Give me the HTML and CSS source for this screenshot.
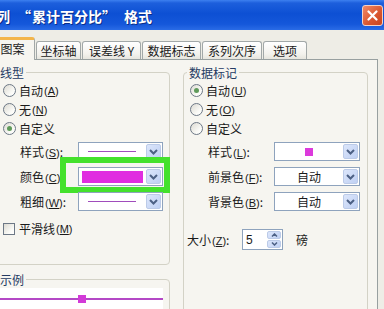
FILE: index.html
```html
<!DOCTYPE html>
<html lang="zh-CN">
<head>
  <meta charset="UTF-8" />
  <meta name="viewport" content="width=device-width, initial-scale=1.0" />
  <title>数据系列格式</title>
  <link rel="stylesheet" href="styles.css">
</head>
<body>
  <div class="window">
    <div class="titlebar">
      <span class="title">列<span class="quote open">“</span>累计百分比<span class="quote close-q">”</span>格式</span>
      <span class="close">
        <svg width="11" height="11" viewBox="0 0 11 11"><path d="M1.5 1.5 L9.5 9.5 M9.5 1.5 L1.5 9.5" stroke="#fff" stroke-width="2.2" stroke-linecap="round"/></svg>
      </span>
    </div>

    <div class="tabs">
      <div class="tab active">图案</div>
      <div class="tab w45">坐标轴</div>
      <div class="tab w59">误差线 Y</div>
      <div class="tab w59">数据标志</div>
      <div class="tab w60">系列次序</div>
      <div class="tab w44">选项</div>
    </div>

    <div class="panel">
      <div class="col left">
        <div class="group line-group">
          <div class="group-title">线型</div>
          <div class="radio-row"><span class="radio"></span>自动<span class="key">(<u>A</u>)</span></div>
          <div class="radio-row"><span class="radio"></span>无<span class="key">(<u>N</u>)</span></div>
          <div class="radio-row"><span class="radio on"></span>自定义</div>

          <div class="field first">
            <span class="field-label">样式<span class="key">(<u>S</u>)</span>:</span>
            <div class="select">
              <span class="select-value"><span class="line-sample"></span></span>
              <span class="drop"><svg width="9" height="6" viewBox="0 0 9 6"><path d="M1 1 L4.5 4.5 L8 1" fill="none" stroke="#4d6185" stroke-width="2"/></svg></span>
            </div>
          </div>
          <div class="field highlighted">
            <span class="field-label">颜色<span class="key">(<u>C</u>)</span>:</span>
            <div class="select">
              <span class="select-value"><span class="color-fill"></span></span>
              <span class="drop"><svg width="9" height="6" viewBox="0 0 9 6"><path d="M1 1 L4.5 4.5 L8 1" fill="none" stroke="#4d6185" stroke-width="2"/></svg></span>
            </div>
            <span class="mark-box"></span>
          </div>
          <div class="field">
            <span class="field-label">粗细<span class="key">(<u>W</u>)</span>:</span>
            <div class="select">
              <span class="select-value"><span class="line-sample"></span></span>
              <span class="drop"><svg width="9" height="6" viewBox="0 0 9 6"><path d="M1 1 L4.5 4.5 L8 1" fill="none" stroke="#4d6185" stroke-width="2"/></svg></span>
            </div>
          </div>

          <div class="check-row"><span class="checkbox"></span>平滑线<span class="key">(<u>M</u>)</span></div>
        </div>

        <div class="group sample-group">
          <div class="group-title">示例</div>
          <div class="sample"><span class="marker"></span></div>
        </div>
      </div>

      <div class="col right">
        <div class="group marker-group">
          <div class="group-title">数据标记</div>
          <div class="radio-row"><span class="radio on"></span>自动<span class="key">(<u>U</u>)</span></div>
          <div class="radio-row"><span class="radio"></span>无<span class="key">(<u>O</u>)</span></div>
          <div class="radio-row"><span class="radio"></span>自定义</div>

          <div class="field first">
            <span class="field-label">样式<span class="key">(<u>L</u>)</span>:</span>
            <div class="select">
              <span class="select-value center"><span class="square"></span></span>
              <span class="drop"><svg width="9" height="6" viewBox="0 0 9 6"><path d="M1 1 L4.5 4.5 L8 1" fill="none" stroke="#4d6185" stroke-width="2"/></svg></span>
            </div>
          </div>
          <div class="field">
            <span class="field-label">前景色<span class="key">(<u>F</u>)</span>:</span>
            <div class="select">
              <span class="select-value center">自动</span>
              <span class="drop"><svg width="9" height="6" viewBox="0 0 9 6"><path d="M1 1 L4.5 4.5 L8 1" fill="none" stroke="#4d6185" stroke-width="2"/></svg></span>
            </div>
          </div>
          <div class="field">
            <span class="field-label">背景色<span class="key">(<u>B</u>)</span>:</span>
            <div class="select">
              <span class="select-value center">自动</span>
              <span class="drop"><svg width="9" height="6" viewBox="0 0 9 6"><path d="M1 1 L4.5 4.5 L8 1" fill="none" stroke="#4d6185" stroke-width="2"/></svg></span>
            </div>
          </div>

          <div class="size-row">
            <span class="size-label">大小<span class="key">(<u>Z</u>)</span>:</span>
            <div class="spinner">
              <span class="spin-value">5</span>
              <span class="spin-btns">
                <span class="spin-btn"><svg width="7" height="4" viewBox="0 0 7 4"><path d="M1 3.5 L3.5 1 L6 3.5" fill="none" stroke="#4d6185" stroke-width="1.5"/></svg></span>
                <span class="spin-btn"><svg width="7" height="4" viewBox="0 0 7 4"><path d="M1 0.5 L3.5 3 L6 0.5" fill="none" stroke="#4d6185" stroke-width="1.5"/></svg></span>
              </span>
            </div>
            <span class="unit">磅</span>
          </div>
        </div>
      </div>
    </div>
  </div>
</body>
</html>
```

FILE: styles.css
```css
body {
  margin: 0;
  width: 384px;
  height: 309px;
  overflow: hidden;
  font-family: "Noto Sans CJK SC", "Liberation Sans", sans-serif;
  font-size: 12px;
  color: #1a1a1a;
  background-color: #eeede6;
}

.window {
  display: flex;
  flex-direction: column;
  height: 309px;
}

/* title bar */
.titlebar {
  display: flex;
  justify-content: space-between;
  align-items: center;
  height: 30px;
  flex-shrink: 0;
  background: linear-gradient(to bottom, #3d80f0 0, #1d5fdc 3px, #0d50d4 45%, #1457da 80%, #2a6ce6 100%);
}

.title {
  margin-left: -4px;
  margin-top: 1px;
  color: #fff;
  font-size: 14px;
  font-weight: 700;
  text-shadow: 1px 1px 0 #0a2f8a;
}

/* the quotes take a full square in the old dialog font */
.quote.open {
  padding-left: 7px;
  margin-right: 1px;
}

.quote.close-q {
  padding-right: 8px;
}

.close {
  display: flex;
  justify-content: center;
  align-items: center;
  width: 19px;
  height: 19px;
  margin-right: 1px;
  border: 1px solid #f3d2c6;
  border-radius: 3px;
  background: linear-gradient(135deg, #f08a68 0%, #d9552e 60%, #c8441f 100%);
}

/* tabs */
.tabs {
  display: flex;
  align-items: flex-end;
  gap: 1px;
  height: 29px;
  flex-shrink: 0;
}

.tab {
  box-sizing: border-box;
  height: 18px;
  display: flex;
  justify-content: center;
  align-items: center;
  border: 1px solid #a2a8a8;
  border-bottom: 0;
  border-radius: 3px 3px 0 0;
  background: linear-gradient(to bottom, #ffffff 0%, #f3f2ed 70%, #e6e5de 100%);
  white-space: nowrap;
  line-height: 16px;
}

.tab.active {
  position: relative;
  z-index: 1;
  width: 45px;
  height: 23px;
  margin-left: -10px;
  margin-bottom: -1px;
  padding-bottom: 2px;
  border-top: 3px solid #f3b54a;
  background: #f6f5f0;
}

.w44 { width: 44px; }
.w45 { width: 45px; }
.w59 { width: 59px; }
.w60 { width: 60px; }

/* page */
.panel {
  box-sizing: border-box;
  display: flex;
  gap: 13px;
  flex: 1;
  width: 388px;
  margin-left: -10px;
  border: 1px solid #98a0a0;
  background: #f6f5f0;
}

.col {
  display: flex;
  flex-direction: column;
}

.col.left {
  width: 176px;
  margin-left: 3px;
}

.col.right {
  width: 185px;
}

.group {
  box-sizing: border-box;
  margin-top: 12px;
  border: 1px solid #d3d2c6;
  border-radius: 4px;
}

.group-title {
  width: fit-content;
  height: 16px;
  margin: -8px 0 0 3px;
  padding: 0 2px;
  line-height: 16px;
  color: #253b63;
  background: #f6f5f0;
}

.line-group {
  padding-bottom: 26px;
}

.sample-group {
  margin-top: 14px;
  flex: 1;
}

.marker-group {
  flex: 1;
}

/* radios and checkbox */
.radio-row,
.check-row {
  display: flex;
  align-items: center;
  height: 19px;
  padding-left: 8px;
}

.marker-group .radio-row {
  padding-left: 6px;
}

.radio {
  box-sizing: border-box;
  display: flex;
  justify-content: center;
  align-items: center;
  width: 13px;
  height: 13px;
  margin-right: 3px;
  border: 1px solid #6d7886;
  border-radius: 50%;
  background: linear-gradient(135deg, #dcdad2 0%, #fbfbf8 70%, #ffffff 100%);
}

.radio.on::after {
  content: "";
  width: 5px;
  height: 5px;
  border-radius: 50%;
  background: #5f9a5a;
}

.checkbox {
  box-sizing: border-box;
  width: 12px;
  height: 12px;
  margin-right: 4px;
  border: 1px solid #6d7886;
  background: linear-gradient(135deg, #dcdad2 0%, #fbfbf8 70%, #ffffff 100%);
}

.check-row {
  margin-top: 8px;
}

.key {
  font-family: "Liberation Sans", sans-serif;
  font-size: 11px;
  margin-left: 1px;
}

/* label + dropdown rows */
.field {
  position: relative;
  display: flex;
  align-items: center;
  height: 19px;
  margin-top: 6px;
  padding-left: 25px;
}

.field.first {
  margin-top: 4px;
}

.marker-group .field {
  padding-left: 24px;
}

.field-label {
  width: 58px;
  white-space: nowrap;
}

.marker-group .field-label {
  width: 66px;
}

.select {
  box-sizing: border-box;
  display: flex;
  align-items: center;
  width: 85px;
  height: 19px;
  border: 1px solid #8ea3bd;
  background: #fff;
}

.marker-group .select {
  width: 86px;
}

.select-value {
  flex: 1;
  display: flex;
  align-items: center;
  height: 100%;
  padding-left: 3px;
}

.select-value.center {
  justify-content: center;
  padding-left: 0;
}

.drop {
  box-sizing: border-box;
  display: flex;
  justify-content: center;
  align-items: center;
  width: 15px;
  height: 15px;
  margin-right: 1px;
  border: 1px solid #bccbe8;
  border-radius: 2px;
  background: linear-gradient(135deg, #dce6fb 0%, #bfd0f3 100%);
}

.line-sample {
  width: 48px;
  height: 1px;
  margin-left: 6px;
  background: #a04cbc;
}

.color-fill {
  width: 61px;
  height: 12px;
  background: #e02ee0;
}

.square {
  width: 8px;
  height: 8px;
  background: #dc3adc;
}

.mark-box {
  position: absolute;
  left: 65px;
  top: -10px;
  box-sizing: border-box;
  width: 110px;
  height: 36px;
  border: 6px solid #44e12c;
}

/* marker size spinner */
.size-row {
  display: flex;
  align-items: center;
  height: 21px;
  margin-top: 18px;
  padding-left: 3px;
}

.size-label {
  width: 55px;
  white-space: nowrap;
}

.spinner {
  box-sizing: border-box;
  display: flex;
  align-items: center;
  width: 41px;
  height: 21px;
  border: 1px solid #8ea3bd;
  background: #fff;
}

.spin-value {
  flex: 1;
  padding-left: 3px;
  font-family: "Liberation Sans", sans-serif;
  font-size: 12px;
}

.spin-btns {
  display: flex;
  flex-direction: column;
  gap: 1px;
  margin-right: 1px;
}

.spin-btn {
  box-sizing: border-box;
  display: flex;
  justify-content: center;
  align-items: center;
  width: 14px;
  height: 8px;
  border: 1px solid #bccbe8;
  border-radius: 2px;
  background: linear-gradient(135deg, #dce6fb 0%, #bfd0f3 100%);
}

.unit {
  margin-left: 13px;
}

/* sample preview */
.sample {
  display: flex;
  justify-content: center;
  align-items: flex-start;
  height: 30px;
  margin: 0 6px 0 5px;
  padding-top: 7px;
  box-sizing: border-box;
  background: linear-gradient(to bottom, transparent 10px, #b448c6 10px, #b448c6 12px, transparent 12px), #fff;
}

.marker {
  width: 8px;
  height: 8px;
  background: #d23ad8;
}
```
